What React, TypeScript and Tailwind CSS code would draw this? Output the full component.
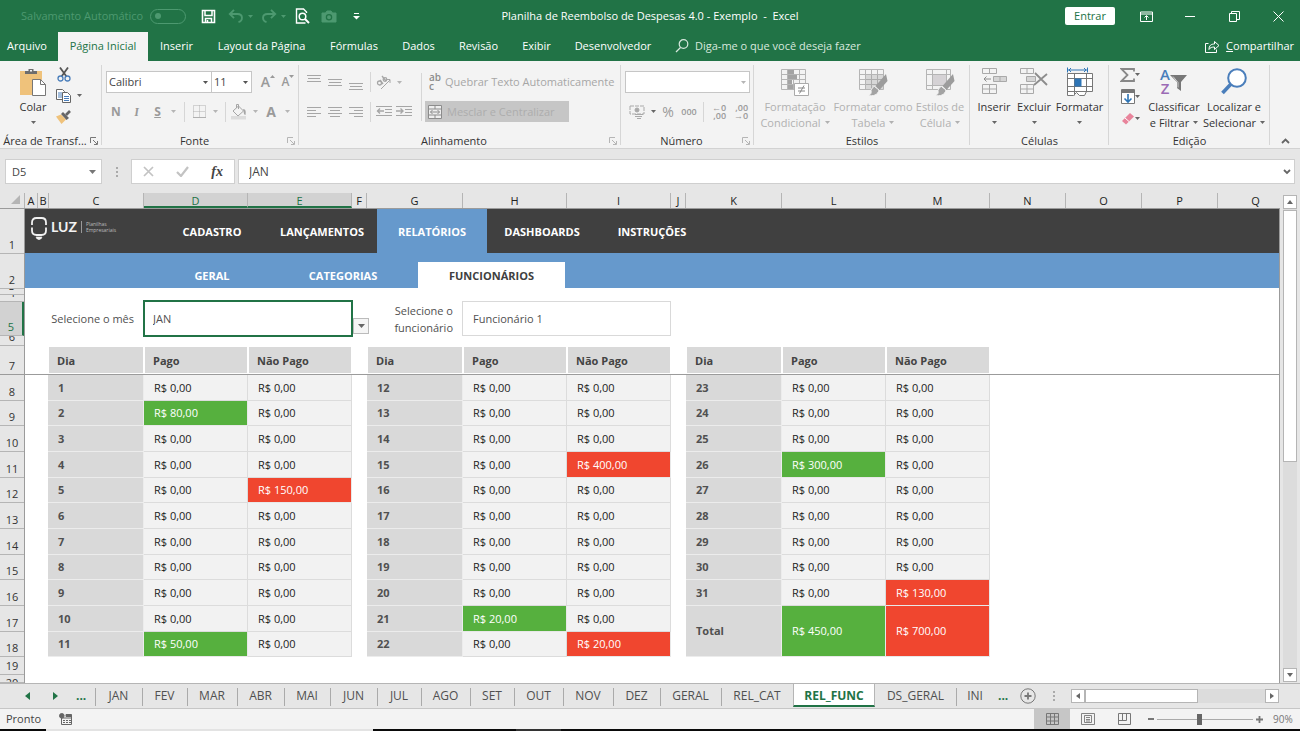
import type { ReactNode } from 'react'
import clsx from 'clsx'

interface BoxProps {
  className?: string;
  children?: ReactNode;
}

interface IconProps {
  w: number;
  h: number;
  className?: string;
  children: ReactNode;
}

function Icon({ w, h, className, children }: IconProps) {
  return (
    <svg width={w} height={h} viewBox={`0 0 ${w} ${h}`} fill="none" stroke="currentColor" className={clsx('shrink-0', className)} aria-hidden="true">
      {children}
    </svg>
  )
}

function Caret({ className }: { className?: string }) {
  return (
    <Icon w={5} h={3} className={className}>
      <path d="M0 0h5L2.5 3z" fill="currentColor" stroke="none" />
    </Icon>
  )
}

/* ---------- title bar ---------- */

function TitleBar() {
  return (
    <header className="flex h-8 items-center text-white">
      <div className="flex flex-1 items-center">
        <span className="ml-[21px] w-[129px] whitespace-nowrap text-[#4d9970]">Salvamento Automático</span>
        <button aria-label="Salvamento Automático" className="flex h-[15px] w-9 items-center rounded-full border border-[#4d9970] pl-1">
          <span className="size-1.5 rounded-full bg-[#4d9970]" />
        </button>
        <button aria-label="Salvar" className="ml-[15px]">
          <Icon w={15} h={15}>
            <path d="M1.5 1.5h12v12h-12z" strokeWidth="1.6" />
            <path d="M4 1.5v5h7v-5M4.500 13.500v-4h6v4M6.500 11v2.500" strokeWidth="1.5" />
          </Icon>
        </button>
        <button aria-label="Desfazer" className="ml-3 flex items-center gap-1 text-[#4d9970]">
          <Icon w={16} h={14}>
            <path d="M6 .8 1.800 5 6 9.200M2 5h7.500c6 0 5.500 7 1 8" strokeWidth="1.900" />
          </Icon>
          <Caret />
        </button>
        <button aria-label="Refazer" className="ml-2 flex items-center gap-1 text-[#4d9970]">
          <Icon w={16} h={14}>
            <path d="M10 .8 14.200 5 10 9.200M14 5H6.500c-6 0-5.500 7-1 8" strokeWidth="1.900" />
          </Icon>
          <Caret />
        </button>
        <button aria-label="Visualizar impressão" className="ml-[9px]">
          <Icon w={15} h={16}>
            <path d="M11.500 5V4l-3-3h-7v14h9" strokeWidth="1.400" />
            <circle cx="7.500" cy="8.500" r="3.300" strokeWidth="1.500" />
            <path d="m10 11 4 4" strokeWidth="2" />
          </Icon>
        </button>
        <button aria-label="Câmera" className="ml-[11px] text-[#4d9970]">
          <Icon w={16} h={13}>
            <path d="M1 3h3.500L6 1h4l1.500 2H15v9H1z" fill="currentColor" />
            <circle cx="8" cy="7.300" r="2.600" stroke="#217346" strokeWidth="1.300" />
          </Icon>
        </button>
        <button aria-label="Personalizar" className="ml-4">
          <Icon w={7} h={7}>
            <path d="M1 .5h5" />
            <path d="M0 3h7L3.500 6.500z" fill="currentColor" stroke="none" />
          </Icon>
        </button>
      </div>
      <h1 className="whitespace-pre">Planilha de Reembolso de Despesas 4.0 - Exemplo  -  Excel</h1>
      <div className="flex flex-1 items-center justify-end">
        <button className="mr-[9px] h-[18px] w-[50px] rounded-xs bg-white text-[#217346]">Entrar</button>
        <button aria-label="Opções de exibição" className="flex w-11 justify-center">
          <Icon w={13} h={11}>
            <path d="M.5 1h12v9.500H.5zM.5 3h12M6.500 9V5M4.500 6.500l2-2 2 2" />
          </Icon>
        </button>
        <button aria-label="Minimizar" className="flex w-11 justify-center">
          <Icon w={10} h={11}><path d="M0 5.500h10" /></Icon>
        </button>
        <button aria-label="Restaurar" className="flex w-11 justify-center">
          <Icon w={11} h={11}><path d="M.5 2.500h7v8h-7zM2.500 2.500v-2h8v8h-3" /></Icon>
        </button>
        <button aria-label="Fechar" className="flex w-11 justify-center">
          <Icon w={11} h={11}><path d="m.5.5 10 10M10.500.5l-10 10" /></Icon>
        </button>
      </div>
    </header>
  )
}

const ribbonTabs = [
  { label: 'Arquivo', width: 'w-[58px] pr-1' },
  { label: 'Página Inicial', width: 'w-[90px]', active: true },
  { label: 'Inserir', width: 'w-[57px]' },
  { label: 'Layout da Página', width: 'w-[113px]' },
  { label: 'Fórmulas', width: 'w-[72px]' },
  { label: 'Dados', width: 'w-[57px]' },
  { label: 'Revisão', width: 'w-[63px]' },
  { label: 'Exibir', width: 'w-[53px]' },
  { label: 'Desenvolvedor', width: 'w-[100px]' },
]

function RibbonTabs() {
  return (
    <nav className="flex h-[29px] items-stretch text-white">
      {ribbonTabs.map((tab) => (
        <button
          key={tab.label}
          className={clsx('shrink-0 pb-px whitespace-nowrap', tab.width, tab.active && 'bg-[#f3f3f3] text-[#217346]')}
        >
          {tab.label}
        </button>
      ))}
      <button className="ml-3 flex items-center gap-1.5 pb-px whitespace-nowrap text-[#d8e8de]">
        <Icon w={14} h={14}>
          <circle cx="8.500" cy="5" r="4.300" strokeWidth="1.200" />
          <path d="M5.500 8.500 1 13" strokeWidth="1.300" />
        </Icon>
        Diga-me o que você deseja fazer
      </button>
      <button className="mr-1.5 ml-auto flex items-center gap-1.5 pb-px whitespace-nowrap">
        <Icon w={15} h={13}>
          <path d="M3.500 3.500h-3v9h11v-3M4 9.500c0-4 2-5.500 5.500-5.500V1.500l4.500 4-4.500 4V7C7 7 5 7.500 4 9.500z" />
        </Icon>
        <span><u>C</u>ompartilhar</span>
      </button>
    </nav>
  )
}

/* ---------- ribbon ---------- */

interface GroupProps extends BoxProps {
  title: string;
  launcher?: string;
}

function Group({ title, launcher, className, children }: GroupProps) {
  return (
    <section className={clsx('relative flex shrink-0 flex-col', className)}>
      <div className="flex h-[72px]">{children}</div>
      <div className="flex h-4 items-center pt-px">
        <h2 className="flex-1 text-center leading-4 whitespace-nowrap text-[#333]">{title}</h2>
        {launcher && (
          <button aria-label={`Opções de ${title}`} className={clsx('mr-1', launcher)}>
            <Icon w={8} h={8}><path d="M.5 6V.5H6M3 3l4 4M7.500 4v3.500H4" /></Icon>
          </button>
        )}
      </div>
      <span className="absolute top-1 right-0 h-20 w-px bg-[#d6d6d6]" />
    </section>
  )
}

interface BigButtonProps {
  icon: ReactNode;
  lines: string[];
  width: string;
  disabled?: boolean;
}

function BigButton({ icon, lines, width, disabled }: BigButtonProps) {
  return (
    <button className={clsx('flex shrink-0 flex-col items-center pt-1.5 leading-[15px] whitespace-nowrap', width, disabled ? 'text-[#b1b1b1]' : 'text-[#333]')}>
      <span className="flex h-8 items-start">{icon}</span>
      <span>{lines[0]}</span>
      <span className="flex h-4 items-center gap-1">
        {lines[1]}
        <Caret className={disabled ? 'text-[#b1b1b1]' : 'text-[#666]'} />
      </span>
    </button>
  )
}

function Cell({ className, children }: BoxProps) {
  return <button className={clsx('flex shrink-0 items-center justify-center', className)}>{children}</button>
}

function Rule({ className }: { className?: string }) {
  return <span className={clsx('h-5 w-px shrink-0 bg-[#d6d6d6]', className)} />
}

function Lines({ rows, className }: { rows: [number, number][]; className?: string }) {
  const h = (rows.length - 1) * 3 + 3
  return (
    <Icon w={14} h={h} className={className}>
      {rows.map(([start, end], i) => (
        <path key={i} d={`M${start} ${i * 3 + 1.5}H${end}`} />
      ))}
    </Icon>
  )
}

function TableIcon({ children }: { children?: ReactNode }) {
  return (
    <Icon w={30} h={30} className="text-[#b5b5b5]">
      <path d="M1.500 2.500h24v20h-24zM1.500 7.500h24M1.500 12.500h24M1.500 17.500h24M7.500 2.500v20M13.500 2.500v20M19.500 2.500v20" />
      {children}
    </Icon>
  )
}

const brush = (
  <g stroke="none">
    <path d="m28 7 1.500 7-8 9-4-4z" fill="#9c9c9c" />
    <path d="M16.500 19.500 21 23c-1 5-6 6.500-11 5.500 3-1 3.500-2.500 3-5 .5-2 2-3.500 3.500-4z" fill="#a3a3a3" stroke="#f3f3f3" />
  </g>
)

function Ribbon() {
  return (
    <div className="flex h-[88px] overflow-hidden border-b border-[#d2d2d2] bg-[#f3f3f3]">
      <Group title="Área de Transf..." launcher="text-[#777]" className="w-[102px]">
        <BigButton
          width="w-[54px] pl-3"
          lines={['Colar', '']}
          icon={
            <Icon w={28} h={30}>
              <path d="M1 4h22v24H1z" fill="#efc27b" stroke="none" />
              <path d="M6 7V4h3.500V2h5v2H18v3z" fill="#6d6d6d" stroke="none" />
              <path d="M11 3h2v1.500h-2z" fill="#f3f3f3" stroke="none" />
              <path d="M13.500 12.500h8l5 5v11h-13z" fill="#fff" stroke="#777" />
              <path d="M21.500 12.500v5h5" stroke="#777" />
            </Icon>
          }
        />
        <div className="flex flex-col gap-1.5 pt-1.5">
          <Cell className="ml-[2px] size-[15px]">
            <Icon w={14} h={15}>
              <path d="m3 .5 6.500 9M11 .5l-6.500 9" stroke="#555" strokeWidth="1.800" />
              <circle cx="3.500" cy="11.500" r="2.500" stroke="#4a7ebb" strokeWidth="1.300" />
              <circle cx="10.500" cy="11.500" r="2.500" stroke="#4a7ebb" strokeWidth="1.300" />
            </Icon>
          </Cell>
          <Cell className="ml-[2px] h-[15px] gap-1.5 text-[#666]">
            <Icon w={15} h={14}>
              <path d="M.5.5h6l2 2v8h-8z" fill="#fff" />
              <path d="M2 4h4M2 6h4M2 8h4" stroke="#4a7ebb" />
              <path d="M6.500 3.500h5l3 3v7h-8z" fill="#fff" />
              <path d="M8 7.500h5M8 9.500h5M8 11.500h5" stroke="#4a7ebb" />
            </Icon>
            <Caret />
          </Cell>
          <Cell className="ml-[2px] size-[15px]">
            <Icon w={15} h={14}>
              <path d="m0 6.500 5-2 5 5-4.500 4.500z" fill="#efc27b" stroke="none" />
              <path d="m5 4 2-2 6 6-2.500 2z" fill="#666" stroke="none" />
              <path d="m10 5 4-4" stroke="#666" strokeWidth="2.600" />
            </Icon>
          </Cell>
        </div>
      </Group>

      <Group title="Fonte" launcher="text-[#b5b5b5]" className="w-[197px]">
        <div className="flex flex-col gap-2 pt-2.5 pl-1 text-[#9a9a9a]">
          <div className="flex h-[22px]">
            <div className="relative flex w-[106px] items-center">
              <select aria-label="Fonte" className="h-full w-full appearance-none border border-[#c6c6c6] bg-white px-0.5 text-[#444]">
                <option>Calibri</option>
              </select>
              <Caret className="pointer-events-none absolute right-1 text-[#555]" />
            </div>
            <div className="relative -ml-px flex w-[41px] items-center">
              <select aria-label="Tamanho da fonte" className="h-full w-full appearance-none border border-[#c6c6c6] bg-white px-0.5 text-[#444]">
                <option>11</option>
              </select>
              <Caret className="pointer-events-none absolute right-1 text-[#555]" />
            </div>
            <Cell className="ml-1.5 w-5 text-sm font-semibold">A<Caret className="mb-3 rotate-180" /></Cell>
            <Cell className="w-5 text-xs font-semibold">A<Caret className="mb-3" /></Cell>
          </div>
          <div className="flex h-[21px] items-center text-xs font-bold">
            <Cell className="w-5">N</Cell>
            <Cell className="w-[21px] font-serif italic">I</Cell>
            <Cell className="w-[21px] underline">S</Cell>
            <Cell className="h-4 w-[11px] text-[#b5b5b5]"><Caret /></Cell>
            <Rule className="mx-[5px]" />
            <Cell className="w-[18px]">
              <Icon w={13} h={13} className="text-[#b0b0b0]">
                <path d="M.5.5h12v12H.5zM6.500.5v12M.5 6.500h12" strokeDasharray="1 1" />
                <path d="M0 12.500h13" />
              </Icon>
            </Cell>
            <Cell className="h-4 w-[14px] text-[#b5b5b5]"><Caret /></Cell>
            <Rule className="mx-[3px]" />
            <Cell className="w-[20px]">
              <Icon w={16} h={16} className="text-[#a5a5a5]">
                <path d="M0 12h15v3.500H0z" fill="#dcdcdc" stroke="none" />
                <path d="m2 7 5.500-5 5 5-5.500 5zM5.500 4V.5h2V5" fill="#f3f3f3" />
                <path d="M12 5c3 0 3 3 2.500 6-2 0-1.500-3-2.500-6z" fill="currentColor" stroke="none" />
              </Icon>
            </Cell>
            <Cell className="h-4 w-3 text-[#b5b5b5]"><Caret /></Cell>
            <Cell className="w-5 text-sm">A</Cell>
            <Cell className="h-4 w-3 text-[#b5b5b5]"><Caret /></Cell>
          </div>
        </div>
      </Group>

      <Group title="Alinhamento" launcher="text-[#b5b5b5]" className="w-[322px]">
        <div className="flex flex-col gap-2 pt-2.5 pl-1 text-[#a6a6a6]">
          <div className="flex h-[22px] items-center">
            <Cell className="w-[21px]"><Lines className="mb-2" rows={[[0, 14], [1, 13], [0, 14]]} /></Cell>
            <Cell className="w-[21px]"><Lines rows={[[0, 14], [1, 13], [0, 14]]} /></Cell>
            <Cell className="w-[21px]"><Lines className="mt-2" rows={[[0, 14], [1, 13], [0, 14]]} /></Cell>
            <Rule className="mx-1" />
            <Cell className="w-[18px]">
              <Icon w={16} h={15}>
                <path d="M5 14 14 5M10.500 4.500H14V8" />
                <circle cx="3.500" cy="8" r="2" strokeWidth="1.300" />
                <path d="m4 5 3 4M6 1l4 5" strokeWidth="1.300" />
                <circle cx="9" cy="4.500" r="1.800" strokeWidth="1.300" />
              </Icon>
            </Cell>
            <Cell className="h-4 w-3 text-[#b5b5b5]"><Caret /></Cell>
          </div>
          <div className="flex h-[21px] items-center">
            <Cell className="w-[21px]"><Lines rows={[[0, 14], [0, 9], [0, 14], [0, 9]]} /></Cell>
            <Cell className="w-[21px]"><Lines rows={[[0, 14], [2, 12], [0, 14], [2, 12]]} /></Cell>
            <Cell className="w-[21px]"><Lines rows={[[0, 14], [5, 14], [0, 14], [5, 14]]} /></Cell>
            <Rule className="mx-1" />
            <Cell className="w-[18px]">
              <Icon w={16} h={13}>
                <path d="M0 1.500h16M9 4.500h7M9 7.500h7M0 10.500h16" />
                <path d="M1 6h7M4 3.500 1.500 6 4 8.500" strokeWidth="1.400" />
              </Icon>
            </Cell>
            <Cell className="w-[22px]">
              <Icon w={16} h={13}>
                <path d="M0 1.500h16M9 4.500h7M9 7.500h7M0 10.500h16" />
                <path d="M0 6h7M4.500 3.500 7 6 4.500 8.500" strokeWidth="1.400" />
              </Icon>
            </Cell>
          </div>
        </div>
        <Rule className="mt-3 ml-1.5 h-12" />
        <div className="flex flex-col gap-2 pt-2.5 pl-[3px] whitespace-nowrap text-[#a6a6a6]">
          <button className="flex h-[22px] items-center gap-1 pl-1">
            <span className="w-3 shrink-0 text-left text-[10px] leading-[9px] font-semibold text-[#8c8c8c]">ab<br />c</span>
            Quebrar Texto Automaticamente
          </button>
          <button className="flex h-[21px] w-36 items-center gap-[5px] bg-[#c6c6c6] pl-[3px]">
            <Icon w={14} h={14} className="text-[#8c8c8c]">
              <path d="M.5.5h13v13H.5z" fill="#eee" />
              <path d="M.5 4h13M.5 10h13M7 .5V4M7 10v3.500M2.500 7h9M4.500 5l-2 2 2 2M9.500 5l2 2-2 2" />
            </Icon>
            <span className="text-[#adadad]">Mesclar e Centralizar</span>
          </button>
        </div>
      </Group>

      <Group title="Número" launcher="text-[#b5b5b5]" className="w-[133px]">
        <div className="flex flex-col gap-2 pt-2.5 pl-1 text-[#9a9a9a]">
          <div className="relative flex h-[22px] w-[125px] items-center">
            <select aria-label="Formato de número" className="h-full w-full appearance-none border border-[#c6c6c6] bg-white">
              <option></option>
            </select>
            <Caret className="pointer-events-none absolute right-1 text-[#b5b5b5]" />
          </div>
          <div className="flex h-[21px] items-center">
            <Cell className="w-6">
              <Icon w={17} h={14} className="text-[#a9a9a9]">
                <path d="M1 1h14v8H1z" strokeDasharray="4 1" />
                <circle cx="8" cy="5" r="2" fill="currentColor" />
                <path d="M6 9.500h8M6 11.500h7M8 13.500h4" />
              </Icon>
            </Cell>
            <Cell className="h-4 w-2 text-[#666]"><Caret /></Cell>
            <Cell className="w-[22px] text-sm">%</Cell>
            <Cell className="w-5 text-[9px] font-semibold">000</Cell>
            <Rule className="mx-1" />
            <Cell className="w-[22px]">
              <span className="text-right text-[9px] leading-[8px] font-semibold">←0<br />,00</span>
            </Cell>
            <Cell className="w-[22px]">
              <span className="text-right text-[9px] leading-[8px] font-semibold">,00<br />→0</span>
            </Cell>
          </div>
        </div>
      </Group>

      <Group title="Estilos" className="w-[216px]">
        <BigButton
          disabled
          width="w-[82px]"
          lines={['Formatação', 'Condicional']}
          icon={
            <TableIcon>
              <path d="M8 3h6v4H8zM8 8h9v4H8zM8 13h4v4H8zM8 18h5v4H8z" fill="#a3a3a3" stroke="none" />
              <path d="M14.500 16.500h14v12h-14z" fill="#fff" stroke="#aaa" />
              <path d="M18 21h7M18 24h7M24 18.500l-4.500 8" stroke="#888" />
            </TableIcon>
          }
        />
        <BigButton
          disabled
          width="w-[74px]"
          lines={['Formatar como', 'Tabela']}
          icon={<TableIcon><path d="M8 8h17v14H8z" fill="#999" fillOpacity=".3" stroke="none" />{brush}</TableIcon>}
        />
        <BigButton
          disabled
          width="w-[60px]"
          lines={['Estilos de', 'Célula']}
          icon={
            <Icon w={30} h={30} className="text-[#b5b5b5]">
              <path d="M1.500 2.500h24v20h-24zM1.500 7.500h24M1.500 18.500h24M7.500 2.500v20M21.500 2.500v20" />
              <path d="M8 8h13v10H8z" fill="#d5d2d5" stroke="none" />
              {brush}
            </Icon>
          }
        />
      </Group>

      <Group title="Células" className="w-[139px]">
        <BigButton
          width="ml-1 w-10"
          lines={['Inserir', '']}
          icon={
            <Icon w={28} h={28} className="text-[#a9a9a9]">
              <path d="M2.500 1.500h14v5h-14zM9.500 1.500v5M2.500 17.500h14v9h-14zM9.500 17.500v9M2.500 22h14" />
              <path d="M13.500 9.500h13v5h-13zM20 9.500v5" fill="#d5d5d5" />
              <path d="M11 12H4M6.500 9.500 4 12l2.500 2.500" stroke="#8c8c8c" />
            </Icon>
          }
        />
        <BigButton
          width="w-10"
          lines={['Excluir', '']}
          icon={
            <Icon w={28} h={28} className="text-[#a9a9a9]">
              <path d="M.5 1.500h13v5H.5zM7 1.500v5M.5 17.500h13v9H.5zM7 17.500v9M.5 22h13" />
              <path d="M6.500 9.500h9v5h-9z" fill="#d5d5d5" />
              <path d="m15 6 12 12M27 7 14 18" stroke="#8c8c8c" strokeWidth="1.800" />
            </Icon>
          }
        />
        <BigButton
          width="w-[51px]"
          lines={['Formatar', '']}
          icon={
            <Icon w={28} h={30} className="text-[#777]">
              <path d="M1.500 6.500h25v18h-25zM1.500 11.500h25M1.500 19.500h25M8.500 6.500v22M20.500 6.500v18M1.500 24v4.500h6l3-3 3 3h5l2-4" fill="#fff" />
              <path d="M8.500 11.500h7v8h-7z" fill="#2e75b6" stroke="none" />
              <path d="M1.500.5v5M21.500.5v5M2 3h19M5 1 3 3l2 2M18 1l2 2-2 2" stroke="#2e75b6" />
            </Icon>
          }
        />
      </Group>

      <Group title="Edição" className="w-[161px]">
        <div className="flex w-9 flex-col gap-[7px] pt-1.5 pl-2 text-[#666]">
          <Cell className="h-[15px] w-[26px] justify-between">
            <Icon w={15} h={14}><path d="M14 3.500V1H1.500l6 6-6 6H14v-2.500" stroke="#888" strokeWidth="1.800" /></Icon>
            <Caret />
          </Cell>
          <Cell className="h-[15px] w-[26px] justify-between">
            <Icon w={14} h={15}>
              <path d="M.5.500h13v14H.5z" fill="#fff" stroke="#777" />
              <path d="M1 1h12v3H1z" fill="#777" stroke="none" />
              <path d="M7 5v8M3.500 9.500 7 13l3.500-3.500" stroke="#2e75b6" strokeWidth="1.600" />
            </Icon>
            <Caret />
          </Cell>
          <Cell className="h-[15px] w-[26px] justify-between">
            <Icon w={14} h={13}>
              <path d="m1 9 8-8 4 3.500L5 12.500z" fill="#e8849b" stroke="none" />
              <path d="m4 6 4 3.500" stroke="#fff" />
            </Icon>
            <Caret />
          </Cell>
        </div>
        <BigButton
          width="w-[58px]"
          lines={['Classificar', 'e Filtrar']}
          icon={
            <span className="flex w-7">
              <span className="flex flex-col text-[15px] leading-[14px] font-semibold">
                <span className="text-[#4a7ebb]">A</span>
                <span className="text-[#9b6bb5]">Z</span>
              </span>
              <Icon w={17} h={16} className="mt-2">
                <path d="M0 0h17l-6 7v9l-4-3V7z" fill="#777" stroke="none" />
                <path d="m3 1.500 5 6v5" stroke="#d0d0d0" />
              </Icon>
            </span>
          }
        />
        <BigButton
          width="w-[62px]"
          lines={['Localizar e', 'Selecionar']}
          icon={
            <Icon w={28} h={28}>
              <circle cx="17" cy="11" r="8.800" fill="#fff" stroke="#4a7ebb" strokeWidth="2" />
              <path d="M11 17 2.500 26" stroke="#4a7ebb" strokeWidth="3.600" />
            </Icon>
          }
        />
      </Group>
      <button aria-label="Recolher a faixa de opções" className="mr-2.5 mb-1 ml-auto self-end text-[#666]">
        <Icon w={9} h={6}><path d="m1 5 3.500-3.500L8 5" strokeWidth="1.800" /></Icon>
      </button>
    </div>
  )
}

/* ---------- formula bar ---------- */

function FormulaBar() {
  return (
    <div className="flex h-11 items-start px-[5px] pt-2.5 text-[#444]">
      <div className="relative flex h-[25px] w-[97px] items-center">
        <input aria-label="Caixa de nome" defaultValue="D5" className="h-full w-full border border-[#cfcfcf] bg-white px-1.5" />
        <Icon w={7} h={4} className="absolute right-1.5 text-[#777]"><path d="M0 0h7L3.500 4z" fill="currentColor" stroke="none" /></Icon>
      </div>
      <div className="flex h-[25px] w-[29px] flex-col items-center justify-center gap-0.5">
        <i className="size-0.5 bg-[#aaa]" /><i className="size-0.5 bg-[#aaa]" /><i className="size-0.5 bg-[#aaa]" />
      </div>
      <div className="flex h-[25px] w-[104px] items-center justify-around border border-[#cfcfcf] bg-white">
        <button aria-label="Cancelar"><Icon w={11} h={11} className="text-[#c3c3c3]"><path d="m1 1 9 9M10 1l-9 9" strokeWidth="1.700" /></Icon></button>
        <button aria-label="Inserir"><Icon w={13} h={11} className="text-[#c3c3c3]"><path d="m1 6 4 4 7-9" strokeWidth="2.200" /></Icon></button>
        <button className="font-['Liberation_Serif',serif] text-sm leading-4 font-bold italic">fx</button>
      </div>
      <div className="relative ml-[3px] flex h-[25px] flex-1 items-center">
        <input aria-label="Barra de fórmulas" defaultValue="JAN" className="h-full w-full border border-[#cfcfcf] bg-white px-2.5 text-xs" />
        <Icon w={8} h={6} className="absolute right-1 text-[#666]"><path d="m1 1 3 3 3-3" strokeWidth="1.800" /></Icon>
      </div>
    </div>
  )
}

/* ---------- sheet ---------- */

const columns = [
  { name: 'A', width: 'w-[13px]' },
  { name: 'B', width: 'w-[11px]' },
  { name: 'C', width: 'w-[95px]' },
  { name: 'D', width: 'w-[104px]', active: true },
  { name: 'E', width: 'w-[104px]', active: true },
  { name: 'F', width: 'w-[15px]' },
  { name: 'G', width: 'w-[96px]' },
  { name: 'H', width: 'w-[104px]' },
  { name: 'I', width: 'w-[104px]' },
  { name: 'J', width: 'w-[15px]' },
  { name: 'K', width: 'w-[96px]' },
  { name: 'L', width: 'w-[104px]' },
  { name: 'M', width: 'w-[104px]' },
  { name: 'N', width: 'w-[76px]' },
  { name: 'O', width: 'w-[76px]' },
  { name: 'P', width: 'w-[76px]' },
  { name: 'Q', width: 'w-[76px]' },
]

// Row heights repeat 26/25/26 so that eleven rows fill 282px
const dayHeights = [
  'h-[26px]', 'h-[25px]', 'h-[26px]', 'h-[26px]', 'h-[25px]', 'h-[26px]',
  'h-[26px]', 'h-[25px]', 'h-[26px]', 'h-[26px]', 'h-[25px]',
]

const sheetRows = [
  'h-[45px]', 'h-[35px]', 'h-[6px]', 'h-[7px]', 'h-[34px]', 'h-[10px]', 'h-[29px]',
  ...dayHeights,
  'h-[18px]', 'h-2',
]

function ColumnHeader() {
  return (
    <div className="flex h-4 overflow-hidden border-b border-[#9b9b9b] text-[11px] leading-4 text-[#222]">
      <div className="flex w-[25px] shrink-0 items-end justify-end border-r border-[#b5b5b5] pr-1 pb-1">
        <Icon w={9} h={9}><path d="M9 0v9H0z" fill="#b5b5b5" stroke="none" /></Icon>
      </div>
      {columns.map((col) => (
        <div
          key={col.name}
          className={clsx(
            'flex shrink-0 justify-center border-r border-[#b5b5b5]',
            col.width,
            col.active && 'border-b-2 border-b-[#217346] bg-[#d2d2d2] text-[#217346]',
          )}
        >
          {col.name}
        </div>
      ))}
    </div>
  )
}

function RowHeader() {
  return (
    <div className="w-[25px] shrink-0 border-r border-[#9b9b9b] bg-[#e6e6e6] text-[11px] text-[#333]">
      {sheetRows.map((height, i) => (
        <div
          key={i}
          className={clsx(
            'flex justify-center overflow-hidden border-b border-[#b5b5b5] leading-4',
            height,
            i === sheetRows.length - 1 ? 'items-start' : 'items-end',
            i === 4 && 'border-r-2 border-r-[#217346] bg-[#d2d2d2] text-[#217346]',
          )}
        >
          {i + 1}
        </div>
      ))}
    </div>
  )
}

function Logo() {
  return (
    <div className="flex w-[132px] shrink-0 items-start gap-1 pt-2 pl-1.5 text-[#f2f2f2]">
      <Icon w={16} h={24}>
        <path d="M1 8V5.500Q1 1 5.500 1h5Q15 1 15 5.500V8M1 10.500v3Q1 18 5.500 18h5q4.500 0 4.500-4.500v-3" strokeWidth="1.800" />
        <path d="M5 20h6l-1 2H9l-1 1-1-1H6z" fill="currentColor" strokeWidth=".6" />
      </Icon>
      <span className="font-['Lato',sans-serif] text-sm leading-5 font-bold">LUZ</span>
      <span className="mt-1 border-l border-[#999] pl-1 font-['Open_Sans',sans-serif] text-[5px] leading-[6px] font-normal text-[#bbb]">Planilhas<br />Empresariais</span>
    </div>
  )
}

const sections = ['CADASTRO', 'LANÇAMENTOS', 'RELATÓRIOS', 'DASHBOARDS', 'INSTRUÇÕES']

function SheetNav() {
  return (
    <nav className="font-['Open_Sans',sans-serif] text-[11px] font-bold text-white">
      <div className="flex h-11 bg-[#404040]">
        <Logo />
        {sections.map((name) => (
          <a
            key={name}
            href="#"
            className={clsx('flex w-[110px] shrink-0 items-center justify-center pt-0.5', name === 'RELATÓRIOS' && 'bg-[#6699cc]')}
          >
            {name}
          </a>
        ))}
      </div>
      <div className="flex h-[35px] items-end bg-[#6699cc] pl-[131px]">
        <a href="#" className="flex h-[26px] w-28 items-center justify-center pt-0.5">GERAL</a>
        <a href="#" className="flex h-[26px] w-[150px] items-center justify-center pt-0.5">CATEGORIAS</a>
        <a href="#" className="flex h-[26px] w-[147px] items-center justify-center bg-white pt-0.5 text-[#404040]">FUNCIONÁRIOS</a>
      </div>
    </nav>
  )
}

function Filters() {
  return (
    <form className="flex h-[37px] items-center text-[11px] text-[#505050]">
      <label htmlFor="mes" className="w-[109px] shrink-0 text-right">Selecione o mês</label>
      <select id="mes" className="ml-[9px] h-[37px] w-[210px] appearance-none border-2 border-[#217346] bg-white px-2">
        <option>JAN</option>
      </select>
      <button type="button" aria-label="Abrir lista" className="mt-3.5 flex h-4 w-4 items-center justify-center border border-[#bbb] bg-[#f5f5f5] text-[#666]">
        <Icon w={7} h={4}><path d="M0 0h7L3.500 4z" fill="currentColor" stroke="none" /></Icon>
      </button>
      <label htmlFor="funcionario" className="w-[84px] shrink-0 text-right leading-[17px]">Selecione o<br />funcionário</label>
      <input id="funcionario" defaultValue="Funcionário 1" className="ml-[9px] h-[35px] w-[209px] border border-[#d9d9d9] px-2.5" />
    </form>
  )
}

interface DayRow {
  day: string;
  paid: string;
  unpaid: string;
}

const paid: Record<number, string> = { 2: '80,00', 11: '50,00', 21: '20,00', 26: '300,00' }
const unpaid: Record<number, string> = { 5: '150,00', 15: '400,00', 22: '20,00', 31: '130,00' }

function daysBetween(first: number, last: number): DayRow[] {
  const rows: DayRow[] = []
  for (let day = first; day <= last; day++) {
    rows.push({ day: String(day), paid: paid[day] ?? '0,00', unpaid: unpaid[day] ?? '0,00' })
  }
  return rows
}

const blocks: DayRow[][] = [
  daysBetween(1, 11),
  daysBetween(12, 22),
  [...daysBetween(23, 31), { day: 'Total', paid: '450,00', unpaid: '700,00' }],
]

function Money({ value, fill }: { value: string; fill: string }) {
  return (
    <td className={clsx('border-r border-b pl-2.5', value === '0,00' ? 'border-[#dcdcdc] bg-[#f2f2f2] text-[#222]' : ['border-[#e8e8e8] text-white', fill])}>
      R$ {value}
    </td>
  )
}

function DayTable({ rows }: { rows: DayRow[] }) {
  return (
    <table className="w-[304px] shrink-0 table-fixed border-separate border-spacing-0 text-left text-[11px] leading-4">
      <thead>
        <tr className="h-[29px] text-[#444]">
          <th className="w-24 border-x border-t border-b-2 border-white bg-[#d9d9d9] pt-0.5 pl-2">Dia</th>
          <th className="w-[104px] border-x border-t border-b-2 border-white bg-[#d9d9d9] pt-0.5 pl-2">Pago</th>
          <th className="w-[104px] border-x border-t border-b-2 border-white bg-[#d9d9d9] pt-0.5 pl-2">Não Pago</th>
        </tr>
      </thead>
      <tbody>
        {rows.map((row, i) => (
          <tr key={row.day} className={row.day === 'Total' ? 'h-[51px]' : dayHeights[i]}>
            <th className="border-r border-b border-[#ececec] bg-[#d9d9d9] pl-2.5 text-[#505050]">{row.day}</th>
            <Money value={row.paid} fill="bg-[#56b03e]" />
            <Money value={row.unpaid} fill="bg-[#f0462f]" />
          </tr>
        ))}
      </tbody>
    </table>
  )
}

function ScrollArrow({ d, label, className }: { d: string; label: string; className?: string }) {
  return (
    <button aria-label={label} className={clsx('flex size-3.5 shrink-0 items-center justify-center border border-[#b5b5b5] bg-white text-[#666]', className)}>
      <Icon w={6} h={6}><path d={d} fill="currentColor" stroke="none" /></Icon>
    </button>
  )
}

function Sheet() {
  return (
    <main className="flex flex-1">
      <div className="flex min-w-0 flex-1 flex-col">
        <ColumnHeader />
        <div className="relative flex h-[474px] flex-1 overflow-hidden border-r border-[#9b9b9b]">
          <RowHeader />
          <div className="min-w-0 flex-1 bg-white font-['Open_Sans',sans-serif]">
            <SheetNav />
            <div className="pt-3"><Filters /></div>
            <div className="mt-[9px] ml-[23px] flex gap-[15px]">
              {blocks.map((rows) => <DayTable key={rows[0].day} rows={rows} />)}
            </div>
          </div>
          <span className="absolute top-[165px] left-0 h-px w-full bg-[#9b9b9b]" />
        </div>
      </div>
      <div className="ml-[3px] flex w-[17px] flex-col pt-0.5 pb-px">
        <ScrollArrow d="M0 5h6L3 1z" label="Rolar para cima" />
        <div className="flex w-3.5 flex-1 flex-col bg-[#dcdcdc] pt-px">
          <div className="h-[252px] border border-[#b5b5b5] bg-white" />
        </div>
        <ScrollArrow d="M0 1h6L3 5z" label="Rolar para baixo" />
      </div>
    </main>
  )
}

/* ---------- bottom bars ---------- */

const sheetTabs = [
  { name: 'JAN', width: 'w-[47px]' },
  { name: 'FEV', width: 'w-[45px]' },
  { name: 'MAR', width: 'w-[50px]' },
  { name: 'ABR', width: 'w-[47px]' },
  { name: 'MAI', width: 'w-[46px]' },
  { name: 'JUN', width: 'w-[47px]' },
  { name: 'JUL', width: 'w-[44px]' },
  { name: 'AGO', width: 'w-[49px]' },
  { name: 'SET', width: 'w-[44px]' },
  { name: 'OUT', width: 'w-[49px]' },
  { name: 'NOV', width: 'w-[50px]' },
  { name: 'DEZ', width: 'w-[47px]' },
  { name: 'GERAL', width: 'w-[61px]' },
  { name: 'REL_CAT', width: 'w-[72px]' },
  { name: 'REL_FUNC', width: 'w-[82px]' },
  { name: 'DS_GERAL', width: 'w-[81px]' },
  { name: 'INI', width: 'w-[38px]' },
]

function SheetTabs() {
  return (
    <nav className="flex h-[26px] items-start border-y border-t-[#b5b5b5] border-b-[#c6c6c6] text-xs text-[#505050]">
      <div className="flex h-6 w-[95px] shrink-0 items-center text-[#217346]">
        <button aria-label="Anterior" className="ml-[25px]"><Icon w={5} h={8}><path d="M5 0v8L0 4z" fill="currentColor" stroke="none" /></Icon></button>
        <button aria-label="Próxima" className="ml-[23px]"><Icon w={5} h={8}><path d="M0 0v8l5-4z" fill="currentColor" stroke="none" /></Icon></button>
        <button className="ml-[18px] font-bold">...</button>
      </div>
      {sheetTabs.map((tab, i) => {
        const active = tab.name === 'REL_FUNC'
        return (
          <button
            key={tab.name}
            className={clsx(
              'relative h-[23px] shrink-0',
              tab.width,
              active && 'border-x border-b-2 border-x-[#b5b5b5] border-b-[#217346] bg-white pt-0.5 font-bold text-[#217346]',
            )}
          >
            {!active && i !== 15 && <span className="absolute top-1 left-0 h-[18px] w-px bg-[#aaa]" />}
            {tab.name}
          </button>
        )
      })}
      <button className="h-6 pl-1 font-bold text-[#217346]">...</button>
      <button aria-label="Nova planilha" className="mt-1 ml-3 text-[#777]">
        <Icon w={16} h={16}><circle cx="8" cy="8" r="7.200" /><path d="M8 4.500v7M4.500 8h7" strokeWidth="1.800" /></Icon>
      </button>
      <div className="flex h-6 flex-1 items-center pr-[21px]">
        <div className="flex min-w-8 flex-1 flex-col items-center gap-0.5">
          <i className="size-0.5 bg-[#aaa]" /><i className="size-0.5 bg-[#aaa]" /><i className="size-0.5 bg-[#aaa]" />
        </div>
        <ScrollArrow d="M5 0v6L1 3z" label="Rolar para a esquerda" />
        <div className="flex h-3.5 w-[180px] bg-[#dcdcdc]">
          <div className="w-[113px] border border-[#b5b5b5] bg-white" />
        </div>
        <ScrollArrow d="M1 0v6l4-3z" label="Rolar para a direita" />
      </div>
    </nav>
  )
}

function StatusBar() {
  return (
    <footer className="flex h-5 items-center bg-[#f3f3f3] text-[#444]">
      <span className="w-[59px] pl-1.5">Pronto</span>
      <button aria-label="Gravar macro" className="text-[#666]">
        <Icon w={13} h={12}>
          <path d="M2.500 5v6.500h10v-10H7M2.500 5h10M4 7.500h2M7 7.500h2M10 7.500h2M4 9.500h2M7 9.500h2M10 9.500h2" />
          <path d="M7 1.500h5v2H7z" fill="currentColor" />
          <circle cx="2.800" cy="2.800" r="2.300" fill="currentColor" />
        </Icon>
      </button>
      <div className="ml-auto flex h-full items-center text-[#777]">
        <button aria-label="Normal" className="flex h-full w-9 items-center justify-center bg-[#c6c6c6]">
          <Icon w={13} h={12}><path d="M.5.5h12v11H.5zM4.500.5v11M8.500.5v11M.5 4h12M.5 8h12" /></Icon>
        </button>
        <button aria-label="Layout da Página" className="flex w-9 justify-center">
          <Icon w={14} h={12}><path d="M.5.5h13v11H.5zM3.500 2.500h7v7h-7zM5 4.500h4M5 6.500h4M5 8h4" strokeWidth=".9" /></Icon>
        </button>
        <button aria-label="Quebra de página" className="flex w-9 justify-center">
          <Icon w={13} h={12}><path d="M.5.5h12v11H.5zM.5 7.500h8v-7M4.500.5v7" /></Icon>
        </button>
        <button aria-label="Reduzir" className="ml-[3px] flex w-3 justify-center"><Icon w={6} h={6}><path d="M0 3h6" strokeWidth="2" /></Icon></button>
        <input
          type="range"
          aria-label="Zoom"
          min={10}
          max={190}
          defaultValue={90}
          className="w-24 appearance-none bg-transparent [&::-webkit-slider-runnable-track]:h-px [&::-webkit-slider-runnable-track]:bg-[#aaa] [&::-webkit-slider-thumb]:-mt-[5px] [&::-webkit-slider-thumb]:h-[11px] [&::-webkit-slider-thumb]:w-[5px] [&::-webkit-slider-thumb]:appearance-none [&::-webkit-slider-thumb]:bg-[#666]"
        />
        <button aria-label="Ampliar" className="flex w-3 justify-center"><Icon w={7} h={7}><path d="M0 3.500h7M3.500 0v7" strokeWidth="1.800" /></Icon></button>
        <span className="w-[35px] pl-2 text-[10px]">90%</span>
      </div>
    </footer>
  )
}

export default function App() {
  return (
    <div className="flex min-h-screen flex-col overflow-hidden bg-[#e6e6e6] font-['Open_Sans','Noto_Sans',sans-serif] text-[11px] leading-4">
      <div className="bg-[#217346]">
        <TitleBar />
        <RibbonTabs />
      </div>
      <Ribbon />
      <FormulaBar />
      <Sheet />
      <SheetTabs />
      <StatusBar />
      <div className="flex h-0.5 bg-[#0a0a0a]">
        <span className="w-[46px]" />
        <span className="w-[327px] bg-[#e3e3e3]" />
        <span className="ml-[143px] w-[45px] bg-[#333]" />
      </div>
    </div>
  )
}
